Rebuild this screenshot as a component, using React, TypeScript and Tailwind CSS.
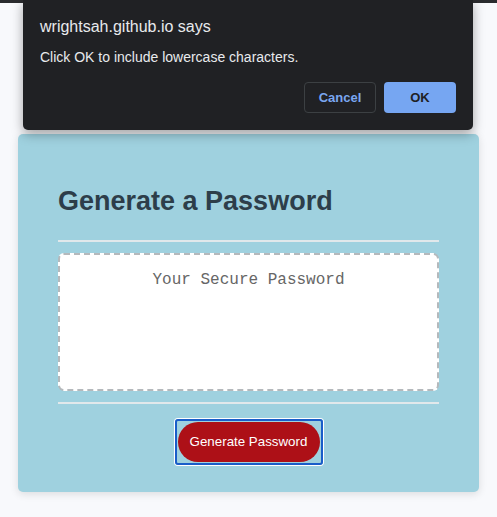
import React from "react";

export default function App() {
  return (
    <div className="relative min-h-[517px] bg-[#f8f9fc] font-['Liberation_Sans',Arial,sans-serif]">
      {/* browser chrome strip */}
      <div className="h-[3px] bg-[#2a2b2e]" />

      {/* Password card */}
      <div className="mx-[18px] mt-[131px] rounded-[5px] bg-[#9fd1df] px-10 pt-[52px] pb-[27px] shadow-[0_2px_8px_rgba(0,0,0,0.12)]">
        <h2 className="text-[27px] font-bold leading-[31px] text-[#2d3e4a]">Generate a Password</h2>
        <div className="mt-[23px] h-[2px] bg-[#e1e8eb]" />
        <div className="mt-[11px] h-[138px] rounded-[6px] border-2 border-dashed border-[#b5b9bc] bg-white pt-[16px] text-center font-['Liberation_Mono','Courier_New',monospace] text-[16px] leading-[18px] text-[#666666]">
          Your Secure Password
        </div>
        <div className="mt-[11px] h-[2px] bg-[#e1e8eb]" />
        <div className="mt-[15px] flex justify-center">
          <div className="rounded-[3px] border-2 border-[#1a5dc9] p-px shadow-[0_0_0_1px_#ffffff]">
            <button className="h-10 w-[142px] rounded-full bg-[#ad1017] text-[13.33px] text-white">
              Generate Password
            </button>
          </div>
        </div>
      </div>

      {/* alert dialog overlay */}
      <div className="absolute left-[23px] top-0 flex h-[130px] w-[450px] flex-col rounded-b-[5px] bg-[#202124] px-[17px] pt-[17px] shadow-[0_4px_12px_rgba(0,0,0,0.35)]">
        <div className="text-[16px] leading-[19px] text-[#e8eaed]">wrightsah.github.io says</div>
        <div className="mt-[13px] text-[14px] leading-[17px] text-[#e8eaed]">Click OK to include lowercase characters.</div>
        <div className="mt-[16px] flex justify-end gap-2">
          <button className="h-[31px] w-[72px] rounded-[4px] border border-[#3c4043] text-[13px] font-bold text-[#7aa7f0]">
            Cancel
          </button>
          <button className="h-[31px] w-[72px] rounded-[4px] bg-[#76a6f2] text-[13px] font-bold text-[#202124]">
            OK
          </button>
        </div>
      </div>
    </div>
  );
}
